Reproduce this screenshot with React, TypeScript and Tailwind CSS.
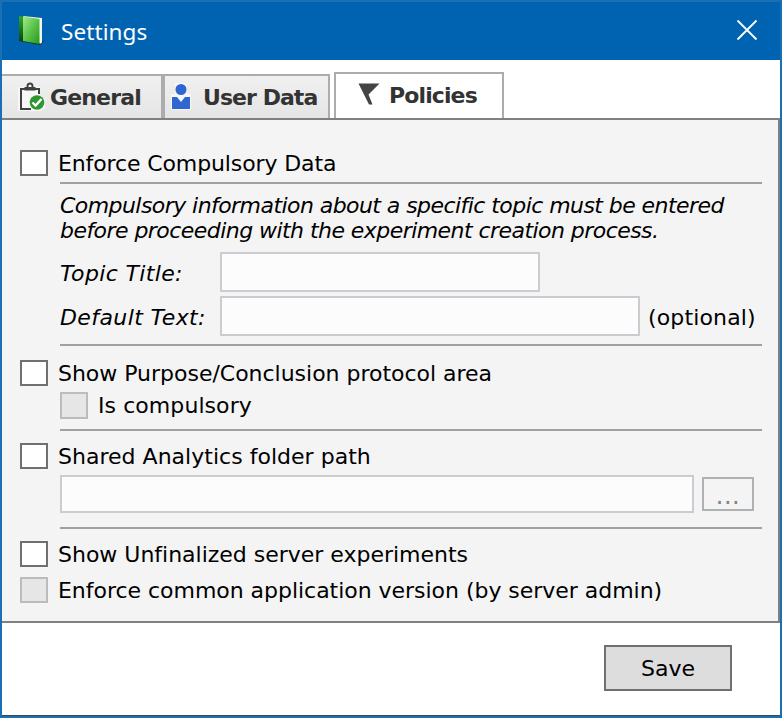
import React from "react";

function Check({ disabled = false, className = "" }: { disabled?: boolean; className?: string }) {
  return (
    <span
      className={`block w-7 shrink-0 border-2 ${disabled ? "border-[#bcbcbc] bg-[#e6e6e6]" : "border-[#707070] bg-white"} ${className || "h-[26px]"}`}
    />
  );
}

function Row({ label, disabled, className }: { label: string; disabled?: boolean; className: string }) {
  return (
    <div className="flex h-[26px] items-center">
      <Check disabled={disabled} />
      <span className={`ml-2.5 pt-0.5 ${className}`}>{label}</span>
    </div>
  );
}

function Rule({ className }: { className: string }) {
  return <div className={`ml-10 h-[2px] w-[702px] bg-[#a0a0a0] ${className}`} />;
}

export default function App() {
  return (
    <div className="flex h-[718px] w-[782px] flex-col overflow-hidden whitespace-nowrap border-2 border-[#1a6fb5] bg-white font-['DejaVu_Sans',sans-serif] text-[22px] leading-[26px] text-black">
      <header className="flex h-[58px] shrink-0 items-center bg-[#0063b1]">
        <svg className="ml-4 h-8 w-[30px]" viewBox="0 0 30 32">
          <defs>
            <linearGradient id="cover" x1="0" y1="0" x2="1" y2="1">
              <stop offset="0" stopColor="#a1ec8b" />
              <stop offset="0.5" stopColor="#5bc34c" />
              <stop offset="1" stopColor="#259a1d" />
            </linearGradient>
            <linearGradient id="spine" x1="0" y1="0" x2="0" y2="1">
              <stop offset="0" stopColor="#36a82c" />
              <stop offset="1" stopColor="#06470c" />
            </linearGradient>
          </defs>
          <path d="M20 28L27 25L22 30Z" fill="#073563" />
          <path d="M1 1L23.500 3L24 28L22 30L1 26Z" fill="#083d0b" />
          <path d="M5 1L24 3V27.500L22 29Z" fill="#f4f5f1" />
          <path d="M1 1L5 1.500V26.500L1 25Z" fill="url(#spine)" />
          <path d="M5 1.500L21.500 4V29L5 26Z" fill="url(#cover)" />
        </svg>
        <span className="ml-[13px] pt-0.5 font-['Noto_Sans',sans-serif] text-[22.5px] tracking-[0.1px] text-white">Settings</span>
        <svg className="mb-0.5 ml-auto mr-[22px] h-[22px] w-[22px]" viewBox="0 0 22 22" fill="none" stroke="white" strokeWidth="1.8">
          <path d="M1.500 1.500L20.500 20.500M20.500 1.500L1.500 20.500" />
        </svg>
      </header>

      <nav className="flex h-[58px] shrink-0 items-end text-[22px] font-bold text-[#333]">
        <div className="flex h-11 w-[161px] items-center border-r-2 border-t-2 border-[#acacac] bg-linear-to-b from-[#f0f0f0] to-[#e5e5e5]">
          <svg className="ml-4 h-[30px] w-[28px] shrink-0" viewBox="0 0 28 30" fill="none">
            <path d="M0 5H7L9 1L12 0L16 2L18 5H22V13L27 17V26L22 29H0Z" fill="#f7f7f7" />
            <path d="M13 27H3V7H21V12" stroke="#404040" strokeWidth="2" />
            <path d="M6.500 5H17.500V8.500H6.500Z" fill="#404040" />
            <path d="M9.500 5V4A2.500 2.500 0 0 1 14.500 4V5" stroke="#404040" strokeWidth="2" />
            <circle cx="19" cy="20.500" r="7.300" fill="#2d9831" />
            <path d="M14.500 20.500L17.600 23.500L23.500 17" stroke="white" strokeWidth="2.400" />
          </svg>
          <span className="ml-1 pt-0.5 tracking-[-0.85px]">General</span>
        </div>
        <div className="flex h-11 w-[167px] items-center border-x-2 border-t-2 border-[#acacac] bg-linear-to-b from-[#f0f0f0] to-[#e5e5e5]">
          <svg className="ml-1.5 h-7 w-5 shrink-0" viewBox="0 0 20 28">
            <path d="M4 0H16V11H20V27H0V11H4Z" fill="#f7f7f7" />
            <circle cx="10" cy="6.500" r="5.500" fill="#2f66d1" />
            <path d="M1 14H6L10 19L14 14H19V26H1Z" fill="#2f66d1" />
          </svg>
          <span className="ml-3 pt-0.5 tracking-[-0.95px]">User Data</span>
        </div>
        <div className="ml-1 flex h-[46px] w-[170px] items-center border-x-2 border-t-2 border-[#acacac] bg-white">
          <svg className="mb-[3px] ml-[22px] h-6 w-[22px] shrink-0" viewBox="0 0 22 24">
            <path d="M0.500 0.500H21.500L10.500 11.500L14.500 21.500H11Z" fill="#444" />
          </svg>
          <span className="ml-[9px] tracking-[-0.88px]">Policies</span>
        </div>
      </nav>

      <main className="h-[505px] shrink-0 border-y-2 border-r-2 border-[#808080] bg-[#f4f4f4] pl-[18px] pt-[30px]">
        <Row label="Enforce Compulsory Data" className="tracking-[-0.12px]" />
        <Rule className="mt-1.5" />
        <div className="ml-10 mt-[9px] h-[50px] italic leading-[25px]">
          <div className="tracking-[-0.56px]">Compulsory information about a specific topic must be entered</div>
          <div className="tracking-[-0.55px]">before proceeding with the experiment creation process.</div>
        </div>
        <div className="ml-10 mt-[9px] flex h-10 items-center">
          <span className="w-40 pt-[3px] italic tracking-[0.35px]">Topic Title:</span>
          <div className="h-10 w-80 border-2 border-[#cbcbd1] bg-[#fcfcfc]" />
        </div>
        <div className="ml-10 mt-1 flex h-10 items-center">
          <span className="w-40 pt-[3px] italic tracking-[0.4px]">Default Text:</span>
          <div className="h-10 w-[420px] border-2 border-[#cbcbd1] bg-[#fcfcfc]" />
          <span className="ml-2 pt-[3px] tracking-[0.15px]">(optional)</span>
        </div>
        <Rule className="mb-[14px] mt-2" />
        <Row label="Show Purpose/Conclusion protocol area" className="tracking-[-0.02px]" />
        <div className="ml-10 mt-1.5 flex h-[27px] items-center">
          <Check disabled className="h-[27px]" />
          <span className="ml-2.5 tracking-[0.07px]">Is compulsory</span>
        </div>
        <Rule className="mb-3 mt-[10px]" />
        <Row label="Shared Analytics folder path" className="tracking-[0.02px]" />
        <div className="ml-10 mt-1.5 flex h-[38px] items-center">
          <div className="h-[38px] w-[634px] border-2 border-[#cbcbd1] bg-[#fcfcfc]" />
          <div className="ml-2 flex h-[34px] w-[52px] items-center justify-center border-2 border-[#adb2b5] bg-[#f4f4f4] pt-1 text-[#838383] text-[24px] tracking-[0.5px]">...</div>
        </div>
        <Rule className="mb-3 mt-[14px]" />
        <Row label="Show Unfinalized server experiments" className="tracking-[-0.01px]" />
        <div className="mt-[10px]">
          <Row disabled label="Enforce common application version (by server admin)" className="tracking-[-0.03px]" />
        </div>
      </main>

      <footer className="flex grow justify-end border-b border-[#444] pr-12 pt-[22px]">
        <div className="flex h-[46px] w-32 items-center justify-center border-2 border-[#707070] bg-[#ddd] pt-0.5">Save</div>
      </footer>
    </div>
  );
}
